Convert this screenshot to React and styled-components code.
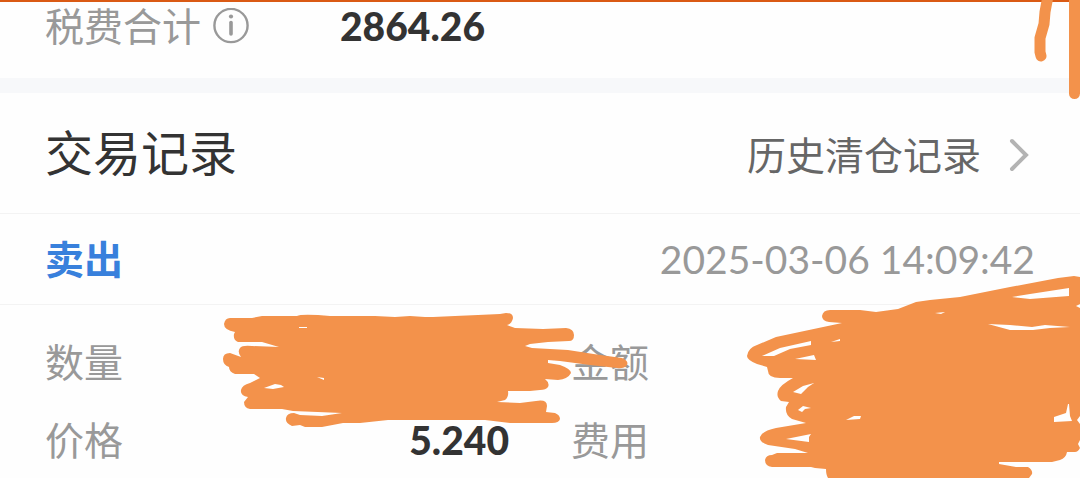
import React from "react";
import styled, { createGlobalStyle } from "styled-components";

const GlobalStyle = createGlobalStyle`
  * { box-sizing: border-box; }
  body {
    margin: 0;
    background: #fefefe;
    color: #333;
    font-family: Lato, "Noto Sans CJK SC", sans-serif;
    font-size: 39px;
    line-height: 48px;
    overflow-x: hidden;
  }
`;

const Page = styled.main`
  border-top: 2px solid #da5a14;
`;

const Summary = styled.section`
  position: relative;
  display: flex;
  padding: 0 45px 28px;
  border-bottom: 15px solid #f7f8fa;
  box-sizing: content-box;
`;

const SummaryLabel = styled.div`
  display: flex;
  align-items: center;
  gap: 12px;
  width: 295px;
  color: #999;
`;

const InfoButton = styled.button`
  display: flex;
  padding: 0;
  border: 0;
  background: none;
  color: inherit;
`;

const Amount = styled.span`
  color: #333;
  font-weight: 900;
`;

const Bar = styled.header`
  display: flex;
  align-items: center;
  justify-content: space-between;
  height: ${(p) => p.$height};
  padding: 0 45px;
  border-bottom: 1px solid #f3f3f3;
`;

const Title = styled.h1`
  margin: 0;
  font-size: 48px;
  font-weight: 400;
`;

const HistoryLink = styled.a`
  display: flex;
  align-items: center;
  gap: 28px;
  padding: 4px 6px 0 0;
  color: #666;
  text-decoration: none;
`;

const Side = styled.h2`
  margin: 0;
  font-size: 39px;
  font-weight: 700;
  color: #3880dc;
`;

const Time = styled.time`
  color: #999;
`;

const Details = styled.section`
  position: relative;
  padding: 28px 45px 9px;
`;

const Grid = styled.dl`
  display: grid;
  grid-template-columns: 1fr 1fr;
  gap: 20px 62px;
  margin: 0;
  line-height: 58px;
`;

const Field = styled.div`
  display: flex;
  justify-content: space-between;
`;

const Term = styled.dt`
  color: #999;
`;

const Value = styled.dd`
  margin: 0;
`;

const Marker = styled.svg`
  position: absolute;
  top: ${(p) => p.$top};
  left: ${(p) => p.$left || "auto"};
  right: ${(p) => p.$right || "auto"};
  color: #f3924b;
  pointer-events: none;
`;

function InfoIcon() {
  return (
    <svg width="36" height="36" viewBox="0 0 36 36" fill="none" stroke="currentColor" aria-hidden="true">
      <circle cx="18" cy="17.500" r="16.6" strokeWidth="2.4" />
      <path d="M18 14.500V26" strokeWidth="3.6" strokeLinecap="round" />
      <circle cx="18" cy="8.500" r="2.1" fill="currentColor" stroke="none" />
    </svg>
  );
}

function ChevronIcon() {
  return (
    <svg width="20" height="34" viewBox="0 0 20 34" fill="none" stroke="#b3b3b3" strokeWidth="4" strokeLinecap="round" strokeLinejoin="miter" aria-hidden="true">
      <path d="M3 3L17 17L3 31" />
    </svg>
  );
}

const LEFT_STROKES =
  "M224 324Q225 318 230 318L252 318L262 316L297 316Q300 314 318 315L330 316L375 316L395 317L410 316L425 317L433 317L455 316L478 315L500 314L506 313Q513 313 513 318Q512 324 507 325L515 328L543 329L566 328Q574 329 574 335Q574 341 569 341L548 342L530 344L525 346L532 348L568 350L600 355L622 358Q629 361 627 365Q624 369 617 368L590 365L560 361L548 360L548 363L560 365Q571 369 571 373Q568 379 558 380L545 379Q550 383 548 387Q546 390 540 390L530 391L508 391Q509 397 505 400L497 402L520 403L536 401Q547 399 547 406L546 412L555 413Q560 415 560 419Q559 423 552 423L510 423L485 420L388 420L360 423L343 423L322 427L305 427L300 425L292 426Q285 423 286 418Q287 413 294 413L300 415L322 416L342 413L293 411L282 409L250 409Q244 408 244 402L248 397Q240 396 241 390Q242 385 250 383L260 378L254 374L235 374Q229 372 229 367Q223 365 223 359Q223 353 230 353L241 357Q237 352 240 348Q242 345 252 346L279 347L262 342L238 342Q233 340 234 334L235 332Q224 330 224 324Z" +
  "M264 388L275 384L281 385L284 387L273 389Z" +
  "M317 377L324 378L324 380Z" +
  "M299 327L307 327L307 328L299 328Z";

const RIGHT_STROKES =
  "M747 356Q748 348 757 345L776 337L842 323L829 322Q822 321 822 316Q823 310 830 310L860 310L876 312L898 309L916 302L930 300L960 297L1010 287L1058 278L1074 276L1080 277L1080 304L1076 306L1080 308L1080 416L1077 420L1080 424L1080 440L1078 444L1080 448Q1078 452 1075 452L1067 452Q1066 458 1060 460L1052 462L999 462L999 464L1016 467L1028 467Q1033 470 1032 474L1029 478L828 478Q826 475 826 469L815 468L811 467L772 467Q765 466 765 460Q766 455 772 455L777 453L808 453L795 449L768 445Q759 442 760 437Q762 431 776 428L806 423L792 419Q785 415 786 407L789 402L781 401Q776 397 778 391Q780 385 793 378L780 378Q768 378 768 371L767 367L757 364Q747 360 747 356Z" +
  "M762 356L780 348L811 341L811 345L790 349L774 356Z" +
  "M831 342L840 339L840 341Z" +
  "M795 359L814 355L816 360Z" +
  "M793 392L803 386L814 383L808 387L801 394Z" +
  "M798 410L803 406L811 408L805 409L802 412Z" +
  "M786 439L811 434L809 437L809 442Z" +
  "M846 420L854 416L861 416L860 419Z" +
  "M1012 297L1030 294L1069 288L1069 296L1030 299Z" +
  "M988 324L1010 325L1032 327L1045 325L1070 327L1050 328L1033 330L1010 330Z" +
  "M1054 417L1066 413L1068 404L1069 404L1070 416L1072 421L1054 422Z" +
  "M935 313L945 312L941 314Z";

export default function App() {
  return (
    <>
      <GlobalStyle />
      <Page>
        <Summary>
          <SummaryLabel>
            税费合计
            <InfoButton type="button" aria-label="税费说明">
              <InfoIcon />
            </InfoButton>
          </SummaryLabel>
          <Amount>2864.26</Amount>
          <Marker $top="-2px" $right="0" width="60" height="100" viewBox="1020 0 60 100" aria-hidden="true">
            <g fill="none" stroke="currentColor" strokeWidth="11" strokeLinecap="round" strokeLinejoin="round">
              <path d="M1048 -4L1045 12L1044 24L1040 38L1040 52L1041 56" />
              <path d="M1074.500 -6V93.500" />
            </g>
          </Marker>
        </Summary>

        <Bar $height="121px">
          <Title>交易记录</Title>
          <HistoryLink href="#history">
            历史清仓记录
            <ChevronIcon />
          </HistoryLink>
        </Bar>

        <Bar $height="91px" as="div">
          <Side>卖出</Side>
          <Time dateTime="2025-03-06T14:09:42">2025-03-06 14:09:42</Time>
        </Bar>

        <Details>
          <Grid>
            <Field>
              <Term>数量</Term>
              <Value />
            </Field>
            <Field>
              <Term>金额</Term>
              <Value />
            </Field>
            <Field>
              <Term>价格</Term>
              <Value>
                <Amount>5.240</Amount>
              </Value>
            </Field>
            <Field>
              <Term>费用</Term>
              <Value />
            </Field>
          </Grid>
          <Marker $top="5px" $left="220px" width="420" height="120" viewBox="220 310 420 120" aria-hidden="true">
            <path d={LEFT_STROKES} fill="currentColor" fillRule="evenodd" />
          </Marker>
          <Marker $top="-35px" $right="0" width="340" height="208" viewBox="740 270 340 208" aria-hidden="true">
            <path d={RIGHT_STROKES} fill="currentColor" fillRule="evenodd" />
          </Marker>
        </Details>
      </Page>
    </>
  );
}
